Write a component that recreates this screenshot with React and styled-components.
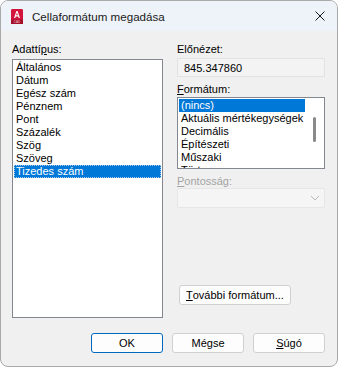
import React from 'react';
import styled, { createGlobalStyle } from 'styled-components';

const GlobalStyle = createGlobalStyle`
  html, body {
    margin: 0;
    padding: 0;
    background: #ffffff;
  }
  * {
    box-sizing: border-box;
  }
`;

const colors = {
  body: '#f0f0f0',
  titleBar: '#eef3f9',
  frame: '#a9a9a9',
  listBorder: '#828790',
  highlight: '#0078d7',
  grayText: '#a3a3a3',
  buttonBorder: '#d0d0d0',
  accent: '#0067c0',
};

const dataTypes = [
  'Általános',
  'Dátum',
  'Egész szám',
  'Pénznem',
  'Pont',
  'Százalék',
  'Szög',
  'Szöveg',
  'Tizedes szám',
];

const formats = [
  '(nincs)',
  'Aktuális mértékegységek',
  'Decimális',
  'Építészeti',
  'Műszaki',
  'Tört',
];

const Window = styled.div`
  width: 338px;
  height: 367px;
  display: flex;
  flex-direction: column;
  border: 1px solid ${colors.frame};
  border-radius: 8px;
  overflow: hidden;
  background: ${colors.body};
  font-family: "Liberation Sans", Arial, sans-serif;
  font-size: 11px;
  color: #000;
`;

const TitleBar = styled.div`
  height: 30px;
  flex: none;
  display: flex;
  align-items: center;
  padding: 0 0 0 10px;
  background: ${colors.titleBar};
`;

const TitleText = styled.div`
  flex: 1;
  margin-left: 9px;
  font-size: 11.6px;
  color: #1a1a1a;
`;

const CloseButton = styled.div`
  width: 44px;
  height: 30px;
  display: flex;
  align-items: center;
  justify-content: center;
  margin-right: -5px;
`;

const Body = styled.div`
  flex: 1;
  display: flex;
  flex-direction: column;
  padding: 12px 12px 13px 11px;
`;

const Content = styled.div`
  flex: 1;
  display: flex;
  gap: 14px;
`;

const LeftColumn = styled.div`
  width: 151px;
  display: flex;
  flex-direction: column;
`;

const RightColumn = styled.div`
  flex: 1;
  display: flex;
  flex-direction: column;
`;

const Label = styled.div`
  height: 13px;
  line-height: 13px;
  margin-top: ${({ $gap }) => $gap || 0}px;
  color: ${({ $disabled }) => ($disabled ? colors.grayText : '#000')};
`;

const Key = styled.span`
  text-decoration: underline;
  text-underline-offset: 1px;
`;

const ListBox = styled.div`
  background: #fff;
  border: 1px solid ${colors.listBorder};
  padding: 1px;
  overflow: hidden;
  display: flex;
  flex: ${({ $fill }) => ($fill ? 1 : 'none')};
  height: ${({ $height }) => ($height ? `${$height}px` : 'auto')};
  margin-top: ${({ $gap }) => $gap || 0}px;
`;

const Items = styled.div`
  flex: 1;
  display: flex;
  flex-direction: column;
  min-width: 0;
`;

const Item = styled.div`
  height: 13px;
  flex: none;
  line-height: 13px;
  padding-left: 2px;
  white-space: nowrap;
  background: ${({ $selected }) => ($selected ? colors.highlight : 'transparent')};
  color: ${({ $selected }) => ($selected ? '#fff' : '#000')};
  outline: ${({ $focused }) => ($focused ? '1px dotted #9fc8ef' : 'none')};
  outline-offset: -1px;
`;

const ScrollTrack = styled.div`
  width: 18px;
  flex: none;
  display: flex;
  justify-content: center;
  padding-top: 18px;
`;

const ScrollThumb = styled.div`
  width: 3px;
  height: 25px;
  border-radius: 2px;
  background: #8a8a8a;
`;

const PreviewBox = styled.div`
  height: 19px;
  margin-top: 2px;
  padding-left: 6px;
  display: flex;
  align-items: center;
  background: #f3f3f3;
  border: 1px solid #e2e2e2;
`;

const ComboBox = styled.div`
  height: 20px;
  display: flex;
  align-items: center;
  justify-content: flex-end;
  padding-right: 4px;
  background: #f5f5f5;
  border: 1px solid #e6e6e6;
  border-radius: 2px;
`;

const Button = styled.div`
  height: 20px;
  width: ${({ $width }) => ($width ? `${$width}px` : 'auto')};
  padding: 0 ${({ $width }) => ($width ? 0 : 6)}px;
  display: flex;
  align-items: center;
  justify-content: center;
  background: #fdfdfd;
  border: 1px solid ${({ $default }) => ($default ? colors.accent : colors.buttonBorder)};
  border-radius: 3px;
  white-space: nowrap;
`;

const MoreRow = styled.div`
  margin-top: auto;
  margin-bottom: 13px;
  display: flex;
  padding-left: 2px;
`;

const Footer = styled.div`
  display: flex;
  justify-content: flex-end;
  gap: 9px;
  margin-top: 15px;
`;

function AppIcon() {
  return (
    <svg width="12" height="15" viewBox="0 0 12 15">
      <rect x="0" y="0" width="12" height="15" rx="1.2" fill="#d3143c" />
      <rect x="0" y="10.5" width="12" height="4.5" fill="#a50f2f" />
      <path d="M3 9 L5.4 2 H6.6 L9 9 H7.7 L7.2 7.4 H4.8 L4.3 9 Z M5.15 6.3 H6.85 L6 3.6 Z" fill="#fff" />
      <text x="6" y="14" fontSize="3" textAnchor="middle" fill="#f6c3cf" fontFamily="Liberation Sans, sans-serif">CAD</text>
    </svg>
  );
}

function CloseIcon() {
  return (
    <svg width="10" height="10" viewBox="0 0 10 10">
      <path d="M0.5 0.5 L9.5 9.5 M9.5 0.5 L0.5 9.5" stroke="#1a1a1a" strokeWidth="1" />
    </svg>
  );
}

function Chevron() {
  return (
    <svg width="10" height="6" viewBox="0 0 10 6">
      <path d="M1 1 L5 5 L9 1" stroke="#b8b8b8" strokeWidth="1" fill="none" />
    </svg>
  );
}

export default function App() {
  return (
    <>
      <GlobalStyle />
      <Window>
        <TitleBar>
          <AppIcon />
          <TitleText>Cellaformátum megadása</TitleText>
          <CloseButton>
            <CloseIcon />
          </CloseButton>
        </TitleBar>
        <Body>
          <Content>
            <LeftColumn>
              <Label>Adattí<Key>p</Key>us:</Label>
              <ListBox $fill $gap={3}>
                <Items>
                  {dataTypes.map((name) => (
                    <Item
                      key={name}
                      $selected={name === 'Tizedes szám'}
                      $focused={name === 'Tizedes szám'}
                    >
                      {name}
                    </Item>
                  ))}
                </Items>
              </ListBox>
            </LeftColumn>
            <RightColumn>
              <Label>Előnézet:</Label>
              <PreviewBox>845.347860</PreviewBox>
              <Label $gap={6}><Key>F</Key>ormátum:</Label>
              <ListBox $height={72} $gap={1}>
                <Items>
                  {formats.map((name) => (
                    <Item key={name} $selected={name === '(nincs)'}>
                      {name}
                    </Item>
                  ))}
                </Items>
                <ScrollTrack>
                  <ScrollThumb />
                </ScrollTrack>
              </ListBox>
              <Label $gap={6} $disabled><Key>P</Key>ontosság:</Label>
              <ComboBox>
                <Chevron />
              </ComboBox>
              <MoreRow>
                <Button><Key>T</Key>ovábbi formátum...</Button>
              </MoreRow>
            </RightColumn>
          </Content>
          <Footer>
            <Button $width={72} $default>OK</Button>
            <Button $width={72}>Mégse</Button>
            <Button $width={72}><Key>S</Key>úgó</Button>
          </Footer>
        </Body>
      </Window>
    </>
  );
}
